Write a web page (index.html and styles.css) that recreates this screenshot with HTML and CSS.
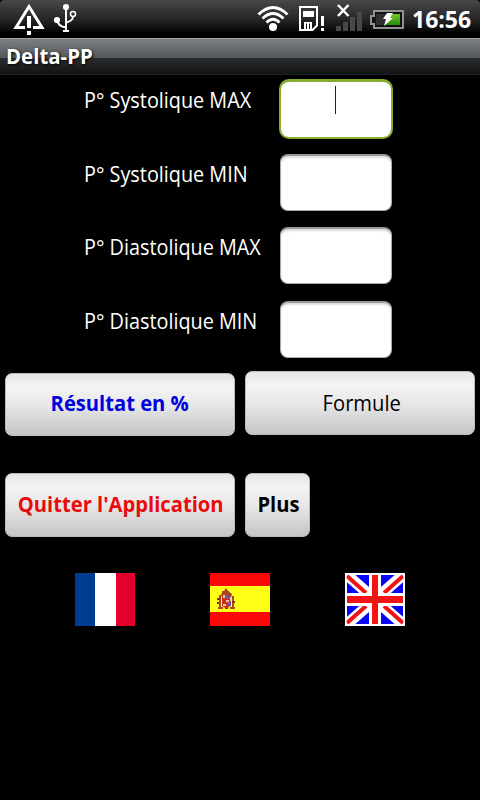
FILE: index.html
```html
<!DOCTYPE html>
<html lang="fr">
  <head>
    <meta charset="UTF-8" />
    <meta name="viewport" content="width=device-width, initial-scale=1.0" />
    <title>Delta-PP</title>
    <link rel="stylesheet" href="styles.css">
  </head>
  <body>
    <div class="status-bar">
      <svg class="status-icons" width="412" height="38" viewBox="0 0 412 38">
        <!-- warning -->
        <path d="M25 27.5H16L29 6.5L42 27.5H33" fill="none" stroke="#fff" stroke-width="3" />
        <path d="M27 16h4v12h-4zM27 31h4v4h-4z" fill="#fff" />
        <!-- usb -->
        <circle cx="66" cy="7" r="3.1" fill="#fff" />
        <circle cx="57" cy="20" r="3.1" fill="#fff" />
        <circle cx="73" cy="14" r="2.5" fill="none" stroke="#fff" stroke-width="1.5" />
        <path d="M66 7V31M57 20Q58 26.5 66 27.5M73 16.5Q73 21 66 22.5" fill="none" stroke="#fff" stroke-width="1.9" />
        <path d="M63 30h6v2h-6z" fill="#fff" />
        <!-- wifi -->
        <g fill="none" stroke="#fff" stroke-width="2.8">
          <path d="M258.5 14.5Q273 0.5 287.5 14.5" />
          <path d="M262.5 18.5Q273 8.5 283.5 18.5" />
          <path d="M266.5 22.5Q273 16 279.5 22.5" />
        </g>
        <circle cx="273" cy="27" r="4" fill="#fff" />
        <!-- sim card -->
        <path d="M300 7h17v18.5l-4.5 4.5H300z" fill="none" stroke="#fff" stroke-width="2" />
        <path d="M303 11h11v6h-11zM304 23h2v7h-2zM307 23h2v7h-2zM310 23h2v6h-2zM304 22h8v1.5h-8z" fill="#fff" />
        <path d="M321 16h3v10h-3zM321 28h3v3h-3z" fill="#fff" />
        <!-- signal -->
        <path d="M336 26h5v5h-5zM343 22h5v9h-5zM350 17h5v14h-5zM357 12h5v19h-5z" fill="#484848" />
        <path d="M338 5l10.5 11M348.5 5L338 16" stroke="#fff" stroke-width="2.5" />
        <!-- battery -->
        <path d="M374 11h29v17h-29v-4h-3v-8h3z" fill="#111" stroke="#929292" stroke-width="2" />
        <path d="M376 14h13v11h-13z" fill="#303030" />
        <path d="M388 14h12v11h-15z" fill="url(#charge)" />
        <path d="M387 13h6l-3 5h3l-9 8 2-7h-3z" fill="#fff" />
        <defs>
          <linearGradient id="charge" x1="0" y1="0" x2="0" y2="1">
            <stop offset="0" stop-color="#74c926" />
            <stop offset="1" stop-color="#278b09" />
          </linearGradient>
        </defs>
      </svg>
      <span class="clock">16:56</span>
    </div>

    <div class="title-bar"><span class="title-text">Delta-PP</span></div>

    <div class="form">
      <div class="form-row">
        <label class="label" for="sysMax">P° Systolique MAX</label>
        <div class="field focused"><input id="sysMax" type="text"><i class="caret"></i></div>
      </div>
      <div class="form-row">
        <label class="label" for="sysMin">P° Systolique MIN</label>
        <div class="field"><input id="sysMin" type="text"></div>
      </div>
      <div class="form-row">
        <label class="label" for="diaMax">P° Diastolique MAX</label>
        <div class="field"><input id="diaMax" type="text"></div>
      </div>
      <div class="form-row">
        <label class="label" for="diaMin">P° Diastolique MIN</label>
        <div class="field"><input id="diaMin" type="text"></div>
      </div>
    </div>

    <div class="btn-row first-row">
      <button class="btn result-btn"><span>Résultat en %</span></button>
      <button class="btn formula-btn"><span>Formule</span></button>
    </div>
    <div class="btn-row second-row">
      <button class="btn quit-btn"><span>Quitter l'Application</span></button>
      <button class="btn more-btn"><span>Plus</span></button>
    </div>

    <div class="flags">
      <svg width="60" height="53" viewBox="0 0 60 53">
        <path d="M0 0h20v53H0z" fill="#003b92" />
        <path d="M20 0h21v53H20z" fill="#fff" />
        <path d="M41 0h19v53H41z" fill="#e4002d" />
      </svg>
      <svg width="60" height="53" viewBox="0 0 60 53">
        <path d="M0 0h60v53H0z" fill="#fa0808" />
        <path d="M0 13h60v26H0z" fill="#ffff18" />
        <!-- coat of arms -->
        <path d="M12 18h7v3h-7zM9 22h2v12H9zM22 23h2v11h-2zM8 34h5v2H8zM20 34h5v2h-5z" fill="#a84a24" />
        <path d="M11 21l3-3 2-3 2 3 4 3-1 4h-9z" fill="#ad4527" />
        <path d="M12 24h9v8l-4 4-5-3z" fill="#d72c1a" />
        <path d="M16 22h3v4h-3zM18 29h3v4h-3z" fill="#77569b" />
        <path d="M13 22h2v3h-2zM16 27h3v2h-3zM13 31h3v2h-3zM20 24h1v4h-1z" fill="#f5c89a" />
        <path d="M7 25h3v2H7zM7 29h2v2H7zM22 28h3v2h-3zM15 35h3v1h-3z" fill="#7b3520" />
      </svg>
      <svg width="60" height="53" viewBox="0 0 60 53">
        <path d="M0 0h60v53H0z" fill="#fff" />
        <path d="M2 2h56v49H2z" fill="#0808f0" />
        <path d="M2 2L58 51M58 2L2 51" stroke="#fff" stroke-width="11" />
        <path d="M2 3L21 20M58 3L39 20M2 50L21 33M58 50L39 33" stroke="#f01414" stroke-width="4" />
        <path d="M24 0h12v53H24zM0 20h60v13H0z" fill="#fff" />
        <path d="M27 2h6v49h-6zM2 23h56v7H2z" fill="#f01414" />
        <path d="M.5 .5h59v52H.5z" fill="none" stroke="#fff" stroke-width="2" />
      </svg>
    </div>
  </body>
</html>
```
FILE: styles.css
```css
* {
  box-sizing: border-box;
}

body {
  margin: 0;
  height: 800px;
  overflow: hidden;
  background: #000;
  color: #fff;
  font-family: "Open Sans", "Noto Sans", sans-serif;
  font-size: 21.5px;
}

.status-bar {
  height: 38px;
  display: flex;
  background: linear-gradient(#484848, #262626 50%, #000 90%);
  border-radius: 4px 4px 0 0;
}

.status-icons {
  flex: none;
}

.clock {
  font-size: 23px;
  font-weight: 700;
  line-height: 39px;
  white-space: nowrap;
}

.title-bar {
  height: 37px;
  padding-left: 6px;
  background: linear-gradient(#7d8082, #55585a 19px, #2b2d2f 19px, #111314 35px, #222 35px);
  border-top: 1px solid #a0a2a3;
  font-weight: 700;
  line-height: 33px;
  text-shadow: 1px 1px 3px #000;
}

.title-text {
  display: inline-block;
  transform: scaleX(0.95);
  transform-origin: left;
}

.form {
  padding: 4px 0 0 84px;
}

.form-row {
  display: flex;
  height: 73.5px;
}

.label {
  width: 195px;
  line-height: 42px;
  white-space: nowrap;
  transform: scaleX(0.922);
  transform-origin: left;
}

.field {
  position: relative;
  width: 112px;
  height: 57px;
  margin: 1px;
}

.field input {
  display: block;
  width: 100%;
  height: 100%;
  padding: 0 8px;
  border: 1px solid #aaa;
  border-top: 2px solid #999;
  border-radius: 8px;
  background: #fff;
  box-shadow: inset 0 2px 2px #ddd;
  font: inherit;
  text-align: center;
  outline: none;
}

.field.focused {
  width: 114px;
  height: 60px;
  margin: 0;
}

.field.focused input {
  border: 2px solid #86ad32;
  border-top-width: 3px;
  border-radius: 10px;
  box-shadow: none;
}

.caret {
  position: absolute;
  left: 56px;
  top: 7px;
  width: 1px;
  height: 28px;
  background: #222;
}

.btn-row {
  display: flex;
  gap: 10px;
  padding-left: 5px;
}

.first-row {
  height: 102px;
  margin-top: -2px;
}

.second-row {
  height: 100px;
}

.btn {
  width: 230px;
  height: 64px;
  padding: 0;
  border: 1px solid #bbb;
  border-radius: 7px;
  background: linear-gradient(#e5e5e5, #f4f4f4 20%, #e8e8e8 50%, #c5c5c5);
  color: #000;
  font: inherit;
  line-height: 58px;
  white-space: nowrap;
}

.btn span {
  display: inline-block;
  margin: 0 -10px;
  transform: scaleX(0.938);
}

.result-btn {
  height: 63px;
  margin-top: 2px;
  padding-bottom: 4px;
  color: #00d;
  font-weight: 700;
}

.formula-btn {
  padding-left: 3px;
}

.quit-btn {
  padding: 0 0 2px 2px;
  color: #e80c0c;
  font-weight: 700;
}

.more-btn {
  width: 65px;
  padding: 0 0 2px 2px;
  font-weight: 700;
}

.flags {
  display: flex;
  gap: 75px;
  padding-left: 75px;
}
```
